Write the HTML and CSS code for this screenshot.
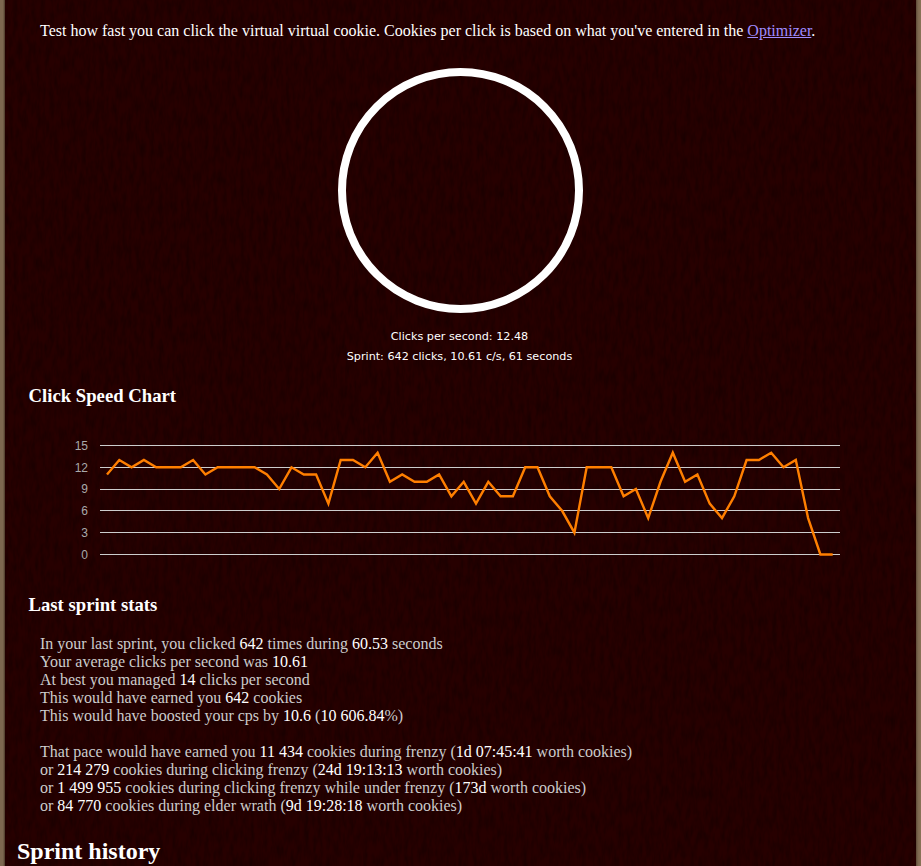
FILE: index.html
```html
<!DOCTYPE html>
<html lang="en">
<head>
<meta charset="utf-8">
<title>Click Speed</title>
<link rel="stylesheet" href="styles.css">
</head>
<body>
<svg class="noise" aria-hidden="true"><filter id="grain"><feTurbulence type="fractalNoise" baseFrequency="0.22 0.07" numOctaves="3" seed="4"/><feColorMatrix values="0 0 0 0 0 0 0 0 0 0 0 0 0 0 0 0.6 0 0 0 -0.2"/></filter><rect width="100%" height="100%" filter="url(#grain)"/></svg>
<main class="page">
  <p class="intro">Test how fast you can click the virtual virtual cookie. Cookies per click is based on what you've entered in the <a href="#">Optimizer</a>.</p>
  <div class="cookie"><div class="ring"></div></div>
  <div class="rate">Clicks per second: 12.48</div>
  <div class="rate">Sprint: 642 clicks, 10.61 c/s, 61 seconds</div>
  <h3 class="chart-title">Click Speed Chart</h3>
  <svg class="chart" width="893" height="150" viewBox="0 0 893 150">
    <g class="grid">
      <line x1="72" x2="812" y1="36.5" y2="36.5"/>
      <line x1="72" x2="812" y1="58.5" y2="58.5"/>
      <line x1="72" x2="812" y1="80.5" y2="80.5"/>
      <line x1="72" x2="812" y1="101.5" y2="101.5"/>
      <line x1="72" x2="812" y1="123.5" y2="123.5"/>
      <line x1="72" x2="812" y1="145.5" y2="145.5"/>
    </g>
    <g class="labels">
      <text x="60" y="41">15</text>
      <text x="60" y="63">12</text>
      <text x="60" y="84">9</text>
      <text x="60" y="106">6</text>
      <text x="60" y="128">3</text>
      <text x="60" y="150">0</text>
    </g>
    <polyline class="series" id="series" points="79,65.5 91.3,51 103.6,58.3 115.9,51 128.2,58.3 140.5,58.3 152.8,58.3 165.1,51 177.4,65.5 189.7,58.3 202,58.3 214.3,58.3 226.6,58.3 238.9,65.5 251.2,80 263.5,58.3 275.8,65.5 288.1,65.5 300.4,94.6 312.7,51 325,51 337.3,58.3 349.6,43.7 361.9,72.8 374.2,65.5 386.5,72.8 398.8,72.8 411.1,65.5 423.4,87.3 435.7,72.8 448,94.6 460.3,72.8 472.6,87.3 484.9,87.3 497.2,58.3 509.5,58.3 521.8,87.3 534.1,101.8 546.4,123.7 558.7,58.3 571,58.3 583.3,58.3 595.6,87.3 607.9,80 620.2,109.1 632.5,72.8 644.8,43.7 657.1,72.8 669.4,65.5 681.7,94.6 694,109.1 706.3,87.3 718.6,51 730.9,51 743.2,43.7 755.5,58.3 767.8,51 780.1,109.1 792.4,145.5 804.7,145.5"/>
  </svg>
  <h3 class="stats-title">Last sprint stats</h3>
  <div class="stats">
    <div>In your last sprint, you clicked <b>642</b> times during <b>60.53</b> seconds</div>
    <div>Your average clicks per second was <b>10.61</b></div>
    <div>At best you managed <b>14</b> clicks per second</div>
    <div>This would have earned you <b>642</b> cookies</div>
    <div>This would have boosted your cps by <b>10.6</b> (<b>10 606.84</b>%)</div>
    <div class="gap">That pace would have earned you <b>11 434</b> cookies during frenzy (<b>1d</b> <b>07:45:41</b> worth cookies)</div>
    <div>or <b>214 279</b> cookies during clicking frenzy (<b>24d</b> <b>19:13:13</b> worth cookies)</div>
    <div>or <b>1 499 955</b> cookies during clicking frenzy while under frenzy (<b>173d</b> worth cookies)</div>
    <div>or <b>84 770</b> cookies during elder wrath (<b>9d</b> <b>19:28:18</b> worth cookies)</div>
  </div>
  <h2 class="history">Sprint history</h2>
</main>
</body>
</html>
```
FILE: styles.css
```css
html, body { margin: 0; height: 866px; overflow: hidden; }
html { background: linear-gradient(90deg, #7d6850 0, #7d6850 3px, #4a3828 5px, #4a3828 915px, #7d6850 918px, #8a7458 921px); }
body {
  position: relative;
  background: #270000;
  margin: 0 5px;
  font-family: "Liberation Serif", serif;
  font-size: 16px;
  color: #ccc;
}
.noise { position: absolute; top: 0; left: -5px; width: 921px; height: 866px; }
.page { position: relative; }
.intro { margin: 0; padding: 22px 0 0 35px; line-height: 18px; color: #fff; }
.intro a { color: #9f8cff; }
.cookie { display: flex; justify-content: center; padding-top: 28px; margin-right: 1px; }
.ring { width: 245px; height: 245px; box-sizing: border-box; border: 8px solid #fff; border-radius: 50%; }
.rate { margin-top: 17px; margin-right: 2px; height: 13px; line-height: 13px; text-align: center; font-family: "DejaVu Sans", sans-serif; font-size: 11.2px; color: #fff; }
.rate + .rate { margin-top: 7px; }
h3, h2 { color: #fff; margin: 0; font-weight: bold; }
h3 { font-size: 18.72px; line-height: 20px; padding-left: 23.5px; }
.chart-title { margin-top: 23px; }
.chart { display: block; margin-left: 23px; margin-top: 3px; overflow: visible; }
.grid line { stroke: #ccc; stroke-width: 1; }
.labels text { font-family: "Liberation Sans", sans-serif; font-size: 12px; fill: #aaa; text-anchor: end; }
.series { fill: none; stroke: #ff7f00; stroke-width: 2.4; }
.stats-title { margin-top: 36px; }
.stats { margin-top: 20px; padding-left: 35px; line-height: 18px; }
.stats b { font-weight: normal; color: #fff; }
.gap { margin-top: 18px; }
.history { font-size: 24px; line-height: 28px; padding-left: 12px; margin-top: 22px; }
```
